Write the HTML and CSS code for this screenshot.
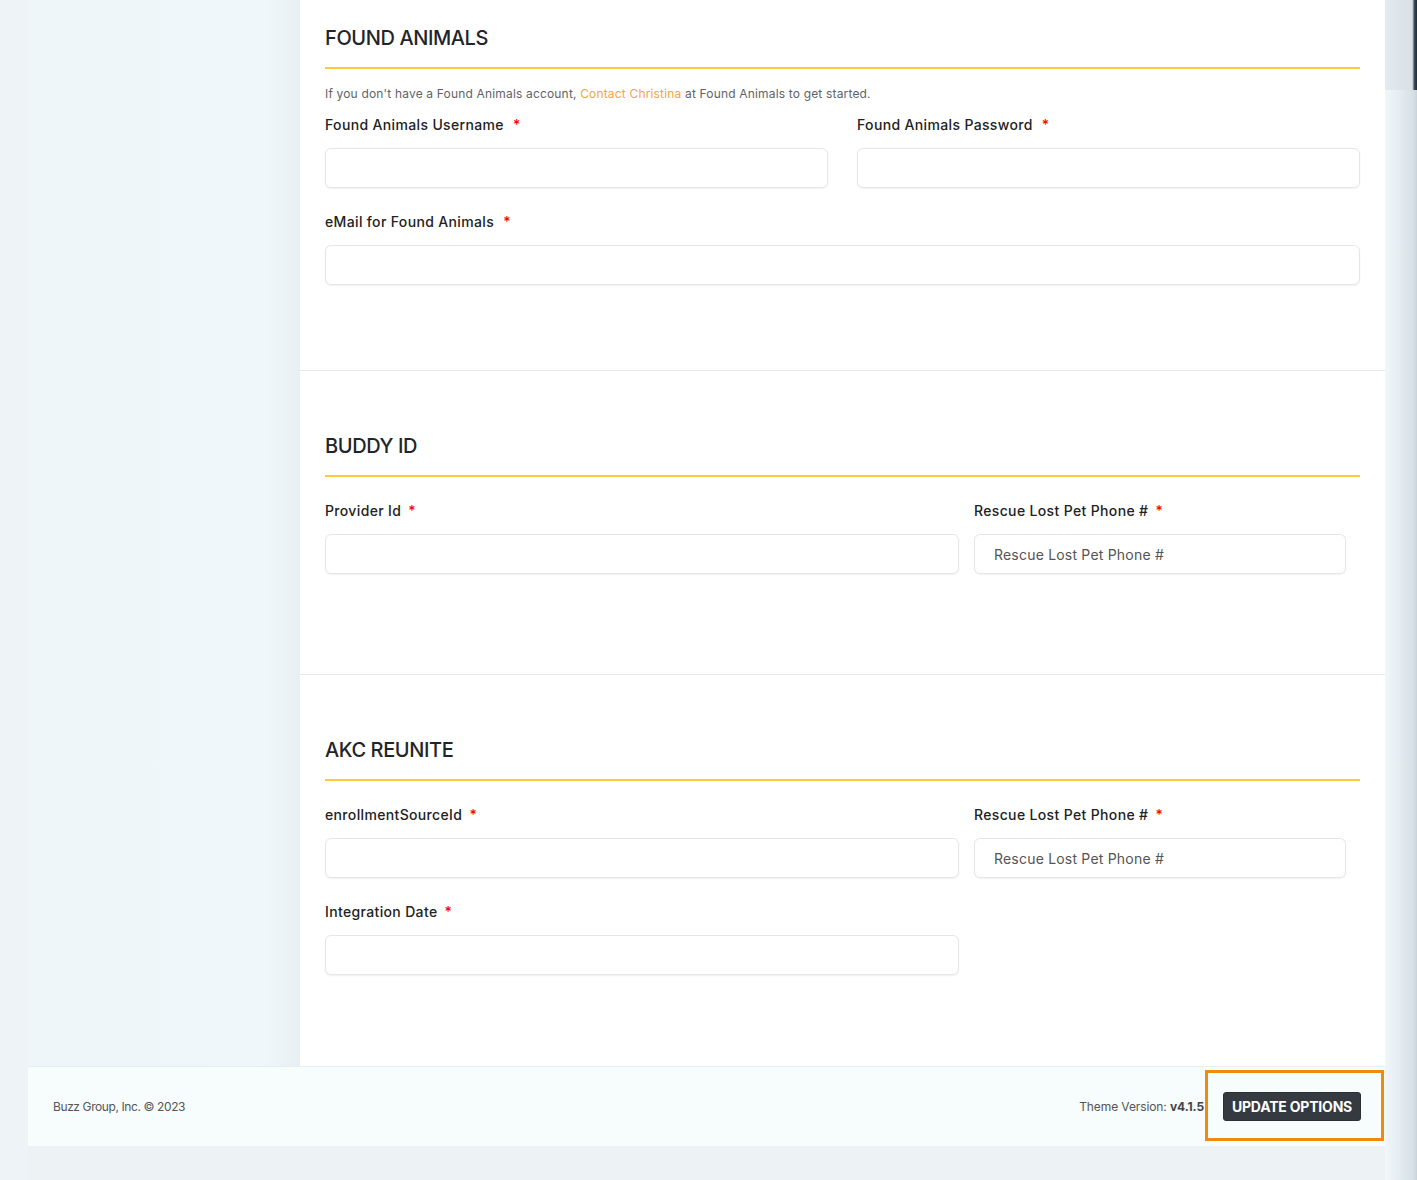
FILE: index.html
```html
<!DOCTYPE html>
<html lang="en">
<head>
<meta charset="utf-8">
<title>Integrations</title>
<link rel="stylesheet" href="styles.css">
</head>
<body>
<div class="page">
  <div class="gutter"></div>
  <div class="shell">
    <div class="main">
      <aside class="sidebar"></aside>
      <div class="content">
        <section class="section first">
          <h2 class="section-title">FOUND ANIMALS</h2>
          <p class="info">If you don't have a Found Animals account, <a href="#" class="link">Contact Christina</a> at Found Animals to get started.</p>
          <div class="grid two">
            <div class="field">
              <label class="label">Found Animals Username <span class="req wide">*</span></label>
              <input class="input" type="text">
            </div>
            <div class="field">
              <label class="label">Found Animals Password <span class="req wide">*</span></label>
              <input class="input" type="password">
            </div>
          </div>
          <div class="grid one">
            <div class="field">
              <label class="label">eMail for Found Animals <span class="req wide">*</span></label>
              <input class="input" type="text">
            </div>
          </div>
        </section>
        <section class="section">
          <h2 class="section-title">BUDDY ID</h2>
          <div class="grid split">
            <div class="field">
              <label class="label">Provider Id <span class="req">*</span></label>
              <input class="input" type="text">
            </div>
            <div class="field">
              <label class="label">Rescue Lost Pet Phone # <span class="req">*</span></label>
              <input class="input" type="text" placeholder="Rescue Lost Pet Phone #">
            </div>
          </div>
        </section>
        <section class="section last">
          <h2 class="section-title">AKC REUNITE</h2>
          <div class="grid split">
            <div class="field">
              <label class="label">enrollmentSourceId <span class="req">*</span></label>
              <input class="input" type="text">
            </div>
            <div class="field">
              <label class="label">Rescue Lost Pet Phone # <span class="req">*</span></label>
              <input class="input" type="text" placeholder="Rescue Lost Pet Phone #">
            </div>
          </div>
          <div class="grid split">
            <div class="field">
              <label class="label">Integration Date <span class="req">*</span></label>
              <input class="input" type="text">
            </div>
          </div>
        </section>
      </div>
    </div>
    <footer class="footer">
      <span class="copyright">Buzz Group, Inc. © 2023</span>
      <div class="footer-right">
        <span class="version">Theme Version: <strong>v4.1.5</strong></span>
        <button class="btn" type="button">UPDATE OPTIONS</button>
        <span class="highlight"></span>
      </div>
    </footer>
  </div>
  <div class="edge"><div class="edge-top"></div></div>
</div>
</body>
</html>
```
FILE: styles.css
```css
* { box-sizing: border-box; }
html, body { margin: 0; padding: 0; }
body {
  background: #edf2f5;
  font-family: "Inter", "Open Sans", sans-serif;
  color: #212529;
  height: 1180px;
  overflow: hidden;
}
.page {
  display: flex;
  align-items: stretch;
  height: 1180px;
}
.gutter {
  width: 28px;
  flex: none;
  background: #edf3f6;
}
.shell {
  width: 1357px;
  flex: none;
  display: flex;
  flex-direction: column;
}
.main {
  display: flex;
  height: 1066px;
}
.sidebar {
  width: 272px;
  flex: none;
  background: linear-gradient(to right, #eff6f9 0%, #eff7fa 88%, #e7eff3 100%);
}
.content {
  flex: 1;
  background: #fff;
  display: flex;
  flex-direction: column;
}
.section {
  padding: 63px 25px 0 25px;
  border-bottom: 1px solid #e6e9ec;
}
.section.first { padding-top: 26px; height: 371px; }
.section:nth-child(2) { height: 304px; }
.section.last { border-bottom: none; flex: 1; }
.section-title {
  margin: 0;
  font-size: 20px;
  line-height: 24px;
  font-weight: 500;
  letter-spacing: -0.4px;
  color: #1f2529;
  padding-bottom: 17px;
  border-bottom: 2px solid #fcc93a;
  margin-bottom: 24px;
}
.section.first .section-title { margin-bottom: 16px; }
.info {
  margin: 0 0 12px 0;
  font-size: 12px;
  line-height: 18px;
  letter-spacing: 0.17px;
  color: #5f6368;
}
.link { color: #f9a441; text-decoration: none; }
.grid { display: grid; column-gap: 29px; margin-bottom: 24px; }
.grid.two { grid-template-columns: 1fr 1fr; }
.grid.one { grid-template-columns: 1fr; }
.grid.split { grid-template-columns: 634px 372px; column-gap: 15px; }
.field { display: flex; flex-direction: column; }
.label {
  font-size: 14px;
  line-height: 20px;
  font-weight: 500;
  letter-spacing: 0.35px;
  color: #222;
  margin-bottom: 13px;
}
.req { color: #f00; margin-left: 3px; }
.req.wide { margin-left: 5px; }
.input {
  height: 40px;
  border: 1px solid #e6e6e6;
  border-radius: 6px;
  background: #fff;
  box-shadow: 0 1px 2px rgba(0,0,0,0.06);
  padding: 0 19px;
  font-family: inherit;
  font-size: 14px;
  letter-spacing: 0.2px;
  color: #555;
  outline: none;
}
.input::placeholder { color: #555; }
.footer {
  height: 80px;
  flex: none;
  background: #f7fcfd;
  border-top: 1px solid #e6eef1;
  display: flex;
  align-items: center;
  justify-content: space-between;
  padding: 0 24px 0 25px;
}
.copyright { font-size: 12px; letter-spacing: -0.4px; color: #555; }
.footer-right {
  position: relative;
  display: flex;
  align-items: center;
  gap: 19px;
}
.version { font-size: 12px; letter-spacing: -0.1px; color: #555; }
.version strong { color: #444; font-weight: 700; }
.btn {
  height: 29px;
  width: 138px;
  background: #343a40;
  color: #fff;
  border: 1px solid #2b3035;
  border-radius: 3px;
  font-family: inherit;
  font-size: 14px;
  font-weight: 700;
  letter-spacing: -0.2px;
  padding: 0;
}
.highlight {
  position: absolute;
  right: -23px;
  top: -22px;
  width: 179px;
  height: 71px;
  border: 3px solid #f08a0c;
  pointer-events: none;
}
.edge {
  flex: 1;
  background: linear-gradient(to right, #f1f6f9 0%, #e6eef2 40%, #d6dfe4 90%, #c9d2d8 100%);
  position: relative;
}
.edge-top {
  height: 90px;
  background: linear-gradient(to right, #e4eaee 0%, #d9e1e6 85%, #3a4a58 92%, #1f2c38 100%);
}
```
